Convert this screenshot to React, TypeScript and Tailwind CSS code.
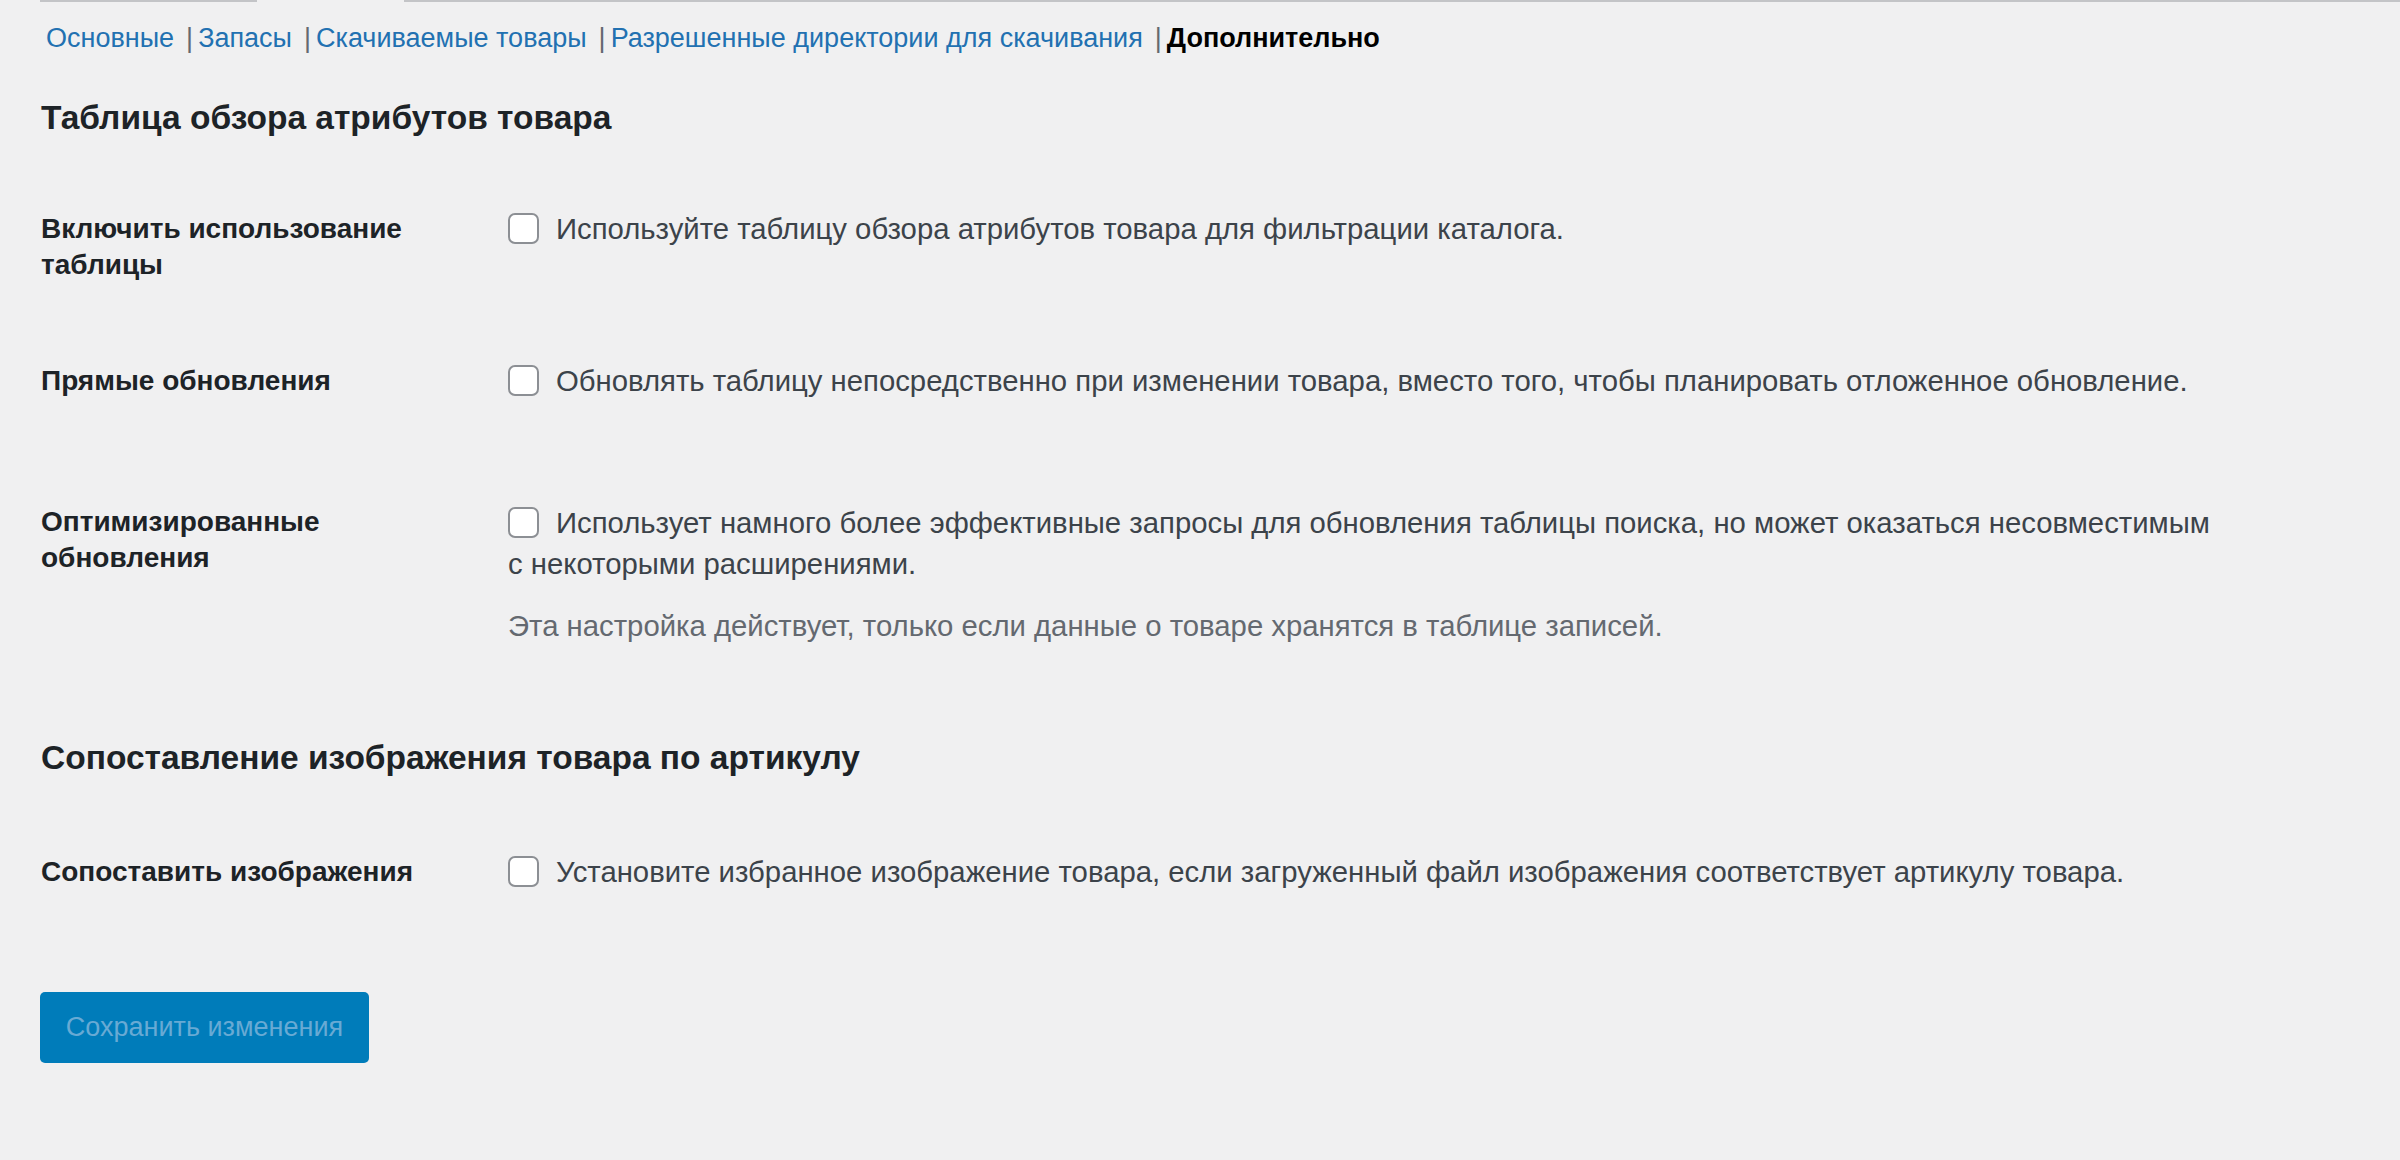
import React from 'react';

const Checkbox: React.FC = () => (
  <span className="inline-block w-[31px] h-[31px] align-middle mr-[17px] mt-[-5px] rounded-[7px] border-2 border-[#8c8f94] bg-white" />
);

const navItems = ['Основные', 'Запасы', 'Скачиваемые товары', 'Разрешенные директории для скачивания'];

const App: React.FC = () => {
  return (
    <div className="min-h-screen bg-[#f0f0f1] font-['Liberation_Sans',Arial,sans-serif] text-[#3c434a]">
      <div className="flex h-[2px]">
        <div className="w-[40px]" />
        <div className="w-[217px] bg-[#c3c4c7]" />
        <div className="w-[147px]" />
        <div className="flex-1 bg-[#c3c4c7]" />
      </div>

      <div className="pl-[41px]">
        <ul className="flex mt-[18px] pl-[5px] text-[27px] leading-[36px] text-[#646970] whitespace-pre">
          {navItems.map((item) => (
            <li key={item} className="flex">
              <a className="text-[#2271b1]">{item}</a>
              <span className="pl-[12px] pr-[5px]">|</span>
            </li>
          ))}
          <li className="font-bold text-black">Дополнительно</li>
        </ul>

        <h2 className="mt-[40px] text-[33.5px] leading-[44px] font-bold text-[#1d2327]">
          Таблица обзора атрибутов товара
        </h2>

        <div className="grid grid-cols-[467px_1fr] mt-[71px] text-[28px]">
          <div className="font-bold leading-[36px] text-[#1d2327]">
            Включить использование
            <br />
            таблицы
          </div>
          <div className="leading-[36px] text-[29.3px]">
            <Checkbox />
            Используйте таблицу обзора атрибутов товара для фильтрации каталога.
          </div>
        </div>

        <div className="grid grid-cols-[467px_1fr] mt-[80px] text-[28px]">
          <div className="font-bold leading-[36px] text-[#1d2327]">Прямые обновления</div>
          <div className="leading-[36px] text-[29.3px]">
            <Checkbox />
            Обновлять таблицу непосредственно при изменении товара, вместо того, чтобы планировать отложенное обновление.
          </div>
        </div>

        <div className="grid grid-cols-[467px_1fr] mt-[105px] text-[28px]">
          <div className="font-bold leading-[36px] text-[#1d2327]">
            Оптимизированные
            <br />
            обновления
          </div>
          <div className="text-[29.3px]">
            <div className="leading-[41px] mt-[-2px] whitespace-nowrap">
              <Checkbox />
              Использует намного более эффективные запросы для обновления таблицы поиска, но может оказаться несовместимым
              <br />с некоторыми расширениями.
            </div>
            <p className="mt-[22px] leading-[40px] text-[#646970]">
              Эта настройка действует, только если данные о товаре хранятся в таблице записей.
            </p>
          </div>
        </div>

        <h2 className="mt-[90px] text-[33.5px] leading-[44px] font-bold text-[#1d2327]">
          Сопоставление изображения товара по артикулу
        </h2>

        <div className="grid grid-cols-[467px_1fr] mt-[74px] text-[28px]">
          <div className="font-bold leading-[36px] text-[#1d2327]">Сопоставить изображения</div>
          <div className="leading-[36px] text-[29.3px]">
            <Checkbox />
            Установите избранное изображение товара, если загруженный файл изображения соответствует артикулу товара.
          </div>
        </div>

        <button
          disabled
          className="mt-[102px] w-[329px] h-[71px] rounded-[5px] bg-[#007cba] text-[27px] text-[#68aad4] -ml-px"
        >
          Сохранить изменения
        </button>
      </div>
    </div>
  );
};

export default App;
